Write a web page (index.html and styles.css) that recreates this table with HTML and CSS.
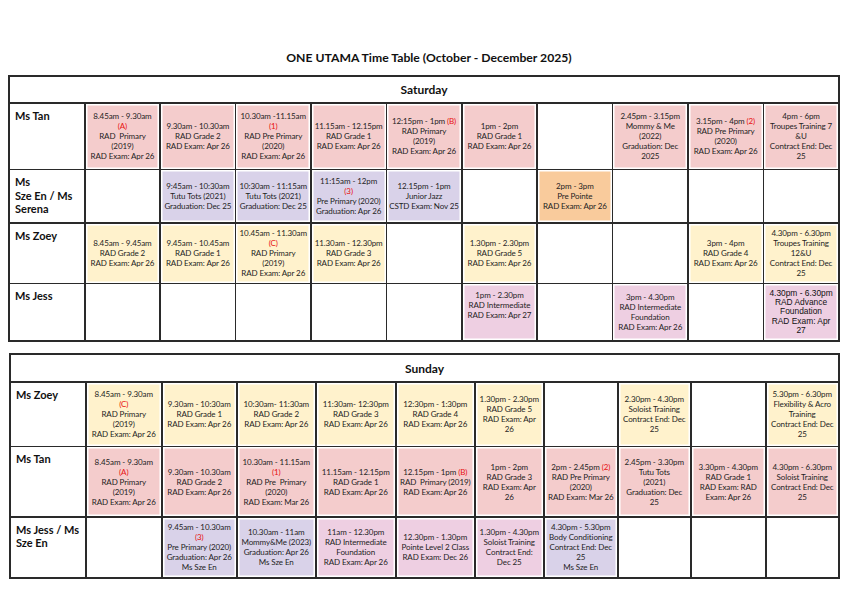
FILE: index.html
```html
<!DOCTYPE html>
<html>
<head>
<meta charset="utf-8">
<link rel="stylesheet" href="styles.css">
</head>
<body>
<h1 class="title">ONE UTAMA Time Table (October - December 2025)</h1>

<div class="tt sat">
  <div class="day">Saturday</div>

  <div class="n">Ms Tan</div>
  <div class="c pk"><p>8.45am - 9.30am<br><span class="r">(A)</span><br>RAD&nbsp; Primary<br>(2019)<br>RAD Exam: Apr 26</p></div>
  <div class="c pk"><p>9.30am - 10.30am<br>RAD Grade 2<br>RAD Exam: Apr 26</p></div>
  <div class="c pk"><p>10.30am -11.15am<br><span class="r">(1)</span><br>RAD Pre Primary<br>(2020)<br>RAD Exam: Apr 26</p></div>
  <div class="c pk"><p>11.15am - 12.15pm<br>RAD Grade 1<br>RAD Exam: Apr 26</p></div>
  <div class="c pk"><p>12:15pm - 1pm <span class="r">(B)</span><br>RAD Primary<br>(2019)<br>RAD Exam: Apr 26</p></div>
  <div class="c pk"><p>1pm - 2pm<br>RAD Grade 1<br>RAD Exam: Apr 26</p></div>
  <div class="c"></div>
  <div class="c pk"><p>2.45pm - 3.15pm<br>Mommy &amp; Me<br>(2022)<br>Graduation: Dec<br>2025</p></div>
  <div class="c pk"><p>3.15pm - 4pm <span class="r">(2)</span><br>RAD Pre Primary<br>(2020)<br>RAD Exam: Apr 26</p></div>
  <div class="c pk"><p>4pm - 6pm<br>Troupes Training 7<br>&amp;U<br>Contract End: Dec<br>25</p></div>

  <div class="n">Ms<br>Sze En / Ms<br>Serena</div>
  <div class="c"></div>
  <div class="c pu"><p>9:45am - 10:30am<br>Tutu Tots (2021)<br>Graduation: Dec 25</p></div>
  <div class="c pu"><p>10:30am - 11:15am<br>Tutu Tots (2021)<br>Graduation: Dec 25</p></div>
  <div class="c pu"><p>11:15am - 12pm<br><span class="r">(3)</span><br>Pre Primary (2020)<br>Graduation: Apr 26</p></div>
  <div class="c pu"><p>12.15pm - 1pm<br>Junior Jazz<br>CSTD Exam: Nov 25</p></div>
  <div class="c"></div>
  <div class="c or"><p>2pm - 3pm<br>Pre Pointe<br>RAD Exam: Apr 26</p></div>
  <div class="c"></div>
  <div class="c"></div>
  <div class="c"></div>

  <div class="n">Ms Zoey</div>
  <div class="c ye"><p>8.45am - 9.45am<br>RAD Grade 2<br>RAD Exam: Apr 26</p></div>
  <div class="c ye"><p>9.45am - 10.45am<br>RAD Grade 1<br>RAD Exam: Apr 26</p></div>
  <div class="c ye"><p>10.45am - 11.30am<br><span class="r">(C)</span><br>RAD Primary<br>(2019)<br>RAD Exam: Apr 26</p></div>
  <div class="c ye"><p>11.30am - 12.30pm<br>RAD Grade 3<br>RAD Exam: Apr 26</p></div>
  <div class="c"></div>
  <div class="c ye"><p>1.30pm - 2.30pm<br>RAD Grade 5<br>RAD Exam: Apr 26</p></div>
  <div class="c"></div>
  <div class="c"></div>
  <div class="c ye"><p>3pm - 4pm<br>RAD Grade 4<br>RAD Exam: Apr 26</p></div>
  <div class="c ye"><p>4.30pm - 6.30pm<br>Troupes Training<br>12&amp;U<br>Contract End: Dec<br>25</p></div>

  <div class="n">Ms Jess</div>
  <div class="c"></div>
  <div class="c"></div>
  <div class="c"></div>
  <div class="c"></div>
  <div class="c"></div>
  <div class="c mv top"><p>1pm - 2.30pm<br>RAD Intermediate<br>RAD Exam: Apr 27</p></div>
  <div class="c"></div>
  <div class="c mv"><p>3pm - 4.30pm<br>RAD Intermediate<br>Foundation<br>RAD Exam: Apr 26</p></div>
  <div class="c"></div>
  <div class="c mv arial"><p>4.30pm - 6.30pm<br>RAD Advance<br>Foundation<br>RAD Exam: Apr<br>27</p></div>
</div>

<div class="tt sun">
  <div class="day">Sunday</div>

  <div class="n">Ms Zoey</div>
  <div class="c ye"><p>8.45am - 9.30am<br><span class="r">(C)</span><br>RAD Primary<br>(2019)<br>RAD Exam: Apr 26</p></div>
  <div class="c ye"><p>9.30am - 10:30am<br>RAD Grade 1<br>RAD Exam: Apr 26</p></div>
  <div class="c ye"><p>10:30am- 11:30am<br>RAD Grade 2<br>RAD Exam: Apr 26</p></div>
  <div class="c ye"><p>11:30am- 12:30pm<br>RAD Grade 3<br>RAD Exam: Apr 26</p></div>
  <div class="c ye"><p>12:30pm - 1:30pm<br>RAD Grade 4<br>RAD Exam: Apr 26</p></div>
  <div class="c ye"><p>1.30pm - 2.30pm<br>RAD Grade 5<br>RAD Exam: Apr<br>26</p></div>
  <div class="c"></div>
  <div class="c ye"><p>2.30pm - 4.30pm<br>Soloist Training<br>Contract End: Dec<br>25</p></div>
  <div class="c"></div>
  <div class="c ye"><p>5.30pm - 6.30pm<br>Flexibility &amp; Acro<br>Training<br>Contract End: Dec<br>25</p></div>

  <div class="n">Ms Tan</div>
  <div class="c pk"><p>8.45am - 9.30am<br><span class="r">(A)</span><br>RAD Primary<br>(2019)<br>RAD Exam: Apr 26</p></div>
  <div class="c pk"><p>9.30am - 10.30am<br>RAD Grade 2<br>RAD Exam: Apr 26</p></div>
  <div class="c pk"><p>10.30am - 11.15am<br><span class="r">(1)</span><br>RAD Pre&nbsp; Primary<br>(2020)<br>RAD Exam: Mar 26</p></div>
  <div class="c pk"><p>11.15am - 12.15pm<br>RAD Grade 1<br>RAD Exam: Apr 26</p></div>
  <div class="c pk"><p>12.15pm - 1pm <span class="r">(B)</span><br>RAD&nbsp; Primary (2019)<br>RAD Exam: Apr 26</p></div>
  <div class="c pk"><p>1pm - 2pm<br>RAD Grade 3<br>RAD Exam: Apr<br>26</p></div>
  <div class="c pk"><p>2pm - 2.45pm <span class="r">(2)</span><br>RAD Pre Primary<br>(2020)<br>RAD Exam: Mar 26</p></div>
  <div class="c pk"><p>2.45pm - 3.30pm<br>Tutu Tots<br>(2021)<br>Graduation: Dec<br>25</p></div>
  <div class="c pk"><p>3.30pm - 4.30pm<br>RAD Grade 1<br>RAD Exam: RAD<br>Exam: Apr 26</p></div>
  <div class="c pk"><p>4.30pm - 6.30pm<br>Soloist Training<br>Contract End: Dec<br>25</p></div>

  <div class="n">Ms Jess / Ms<br>Sze En</div>
  <div class="c"></div>
  <div class="c pu"><p>9.45am - 10.30am<br><span class="r">(3)</span><br>Pre Primary (2020)<br>Graduation: Apr 26<br>Ms Sze En</p></div>
  <div class="c pu"><p>10.30am - 11am<br>Mommy&amp;Me (2023)<br>Graduation: Apr 26<br>Ms Sze En</p></div>
  <div class="c mv"><p>11am - 12.30pm<br>RAD Intermediate<br>Foundation<br>RAD Exam: Apr 26</p></div>
  <div class="c mv"><p>12.30pm - 1.30pm<br>Pointe Level 2 Class<br>RAD Exam: Dec 26</p></div>
  <div class="c mv"><p>1.30pm - 4.30pm<br>Soloist Training<br>Contract End:<br>Dec 25</p></div>
  <div class="c pu"><p>4.30pm - 5.30pm<br>Body Conditioning<br>Contract End: Dec<br>25<br>Ms Sze En</p></div>
  <div class="c"></div>
  <div class="c"></div>
  <div class="c"></div>
</div>
</body>
</html>
```

FILE: styles.css
```css
html, body {
  margin: 0;
  padding: 0;
  background: #ffffff;
}

body {
  width: 850px;
  height: 607px;
  overflow: hidden;
  font-family: Lato, "Liberation Sans", sans-serif;
  color: #222;
}

.title {
  margin: 0;
  padding: 50px 0 0 8px;
  height: 25px;
  box-sizing: content-box;
  font-size: 12.2px;
  line-height: 16px;
  font-weight: 700;
  text-align: center;
  color: #111;
}

.tt {
  display: grid;
  margin-left: 8px;
  width: 832px;
  box-sizing: border-box;
  border: 2px solid #2a2a2a;
  background: #2a2a2a;
  gap: 1.5px;
}

.sat {
  grid-template-columns: 74px repeat(10, 1fr);
  grid-template-rows: 25px 65px 52px 59px 56px;
}

.sun {
  margin-top: 11px;
  margin-left: 9px;
  width: 831px;
  grid-template-columns: 74px 74.5px 73.5px 77.5px 78.5px 77.5px 67.5px 72.5px 71.5px 73.5px 1fr;
  grid-template-rows: 26px 63px 69px 59px;
}

.day {
  grid-column: 1 / -1;
  background: #fff;
  display: flex;
  align-items: center;
  justify-content: center;
  font-size: 12px;
  font-weight: 700;
  color: #111;
}

.n {
  background: #fff;
  padding: 5px 5px;
  font-size: 11px;
  line-height: 13.5px;
  font-weight: 700;
  color: #111;
}

.c {
  background: #fff;
  display: flex;
  align-items: center;
  justify-content: center;
  text-align: center;
  font-size: 8px;
  letter-spacing: -0.1px;
  line-height: 10px;
  color: #1e1e1e;
  padding: 0 1px;
  min-width: 0;
}

.c p {
  margin: 0;
}

.pk, .pu, .ye, .or, .mv {
  box-shadow: inset 0 0 0 1.5px #fff;
}

.pk { background: #f4cccc; }
.pu { background: #d9d2e9; }
.ye { background: #fff2cc; }
.or { background: #f9cb9c; }
.mv { background: #eecfe2; }

.top {
  align-items: flex-start;
  padding-top: 6px;
}

.arial {
  font-family: "Liberation Sans", Arial, sans-serif;
  font-size: 8.4px;
  letter-spacing: 0;
  line-height: 9.3px;
  color: #111;
}

.r {
  color: #e8100f;
}
```
